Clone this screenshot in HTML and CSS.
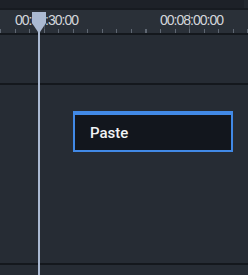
FILE: index.html
```html
<!DOCTYPE html>
<html>
<head>
<meta charset="utf-8">
<link rel="stylesheet" href="styles.css">
</head>
<body>
<div class="timeline">
  <div class="topbar"><div class="topbar-scroll"></div></div>
  <div class="ruler">
    <div class="major" style="left:44px"></div>
    <div class="major" style="left:189px"></div>
    <div class="ticks"></div>
    <span class="label" style="left:15px">00:07:30:00</span>
    <span class="label" style="left:160px">00:08:00:00</span>
  </div>
  <div class="track track-a"></div>
  <div class="track track-b"></div>
  <div class="track track-c"></div>

  <div class="playhead">
    <svg class="playhead-head" width="14" height="21" viewBox="0 0 14 21">
      <polygon points="0,0 14,0 14,11 8,20 6,20 0,11" fill="#aab9d1"/>
    </svg>
    <div class="playhead-line"></div>
  </div>

  <div class="menu">
    <div class="menu-item">Paste</div>
  </div>
</div>
</body>
</html>
```
FILE: styles.css
```css
html, body {
  margin: 0;
  padding: 0;
  background: #262c34;
  overflow: hidden;
}
.timeline {
  position: relative;
  width: 248px;
  height: 275px;
  display: flex;
  flex-direction: column;
  font-family: "Liberation Sans", Arial, sans-serif;
}
.topbar {
  height: 8px;
  background: #1d2128;
  border-bottom: 2px solid #171b21;
  position: relative;
}
.topbar-scroll {
  position: absolute;
  right: 0;
  top: 0;
  width: 4px;
  height: 8px;
  background: #22272e;
}
.ruler {
  position: relative;
  height: 23px;
  background: #2a3038;
  border-bottom: 2px solid #14181d;
}
.ticks {
  position: absolute;
  left: 0;
  right: 0;
  bottom: 0;
  height: 4px;
  background: repeating-linear-gradient(to right, #5f6772 0 1px, transparent 1px 14.55px);
}
.major {
  position: absolute;
  top: 3px;
  bottom: 0;
  width: 1px;
  background: #4a525d;
}
.label {
  position: absolute;
  top: 4px;
  font-size: 14px;
  line-height: 13px;
  letter-spacing: -1px;
  color: #d3d6db;
  white-space: nowrap;
}
.track {
  background: #262c34;
}
.track-a {
  height: 48px;
  border-bottom: 2px solid #14181d;
}
.track-b {
  height: 178px;
  border-bottom: 2px solid #14181d;
}
.track-c {
  flex: 1;
}
.playhead {
  position: absolute;
  left: 32px;
  top: 12px;
  bottom: 0;
  width: 14px;
}
.playhead-head {
  display: block;
  position: absolute;
  left: 0;
  top: 0;
}
.playhead-line {
  position: absolute;
  left: 6px;
  top: 18px;
  bottom: 0;
  width: 2px;
  background: #aab9d1;
}
.menu {
  position: absolute;
  left: 73px;
  top: 111px;
  width: 156px;
  height: 35px;
  background: #12161d;
  border: 2px solid #4189e6;
  border-top-width: 4px;
  display: flex;
  flex-direction: column;
  justify-content: center;
}
.menu-item {
  padding-left: 15px;
  font-family: Roboto, "Noto Sans", sans-serif;
  font-size: 15px;
  font-weight: 500;
  color: #f1f3f5;
  line-height: 16px;
  margin-top: 0px;
}
```
